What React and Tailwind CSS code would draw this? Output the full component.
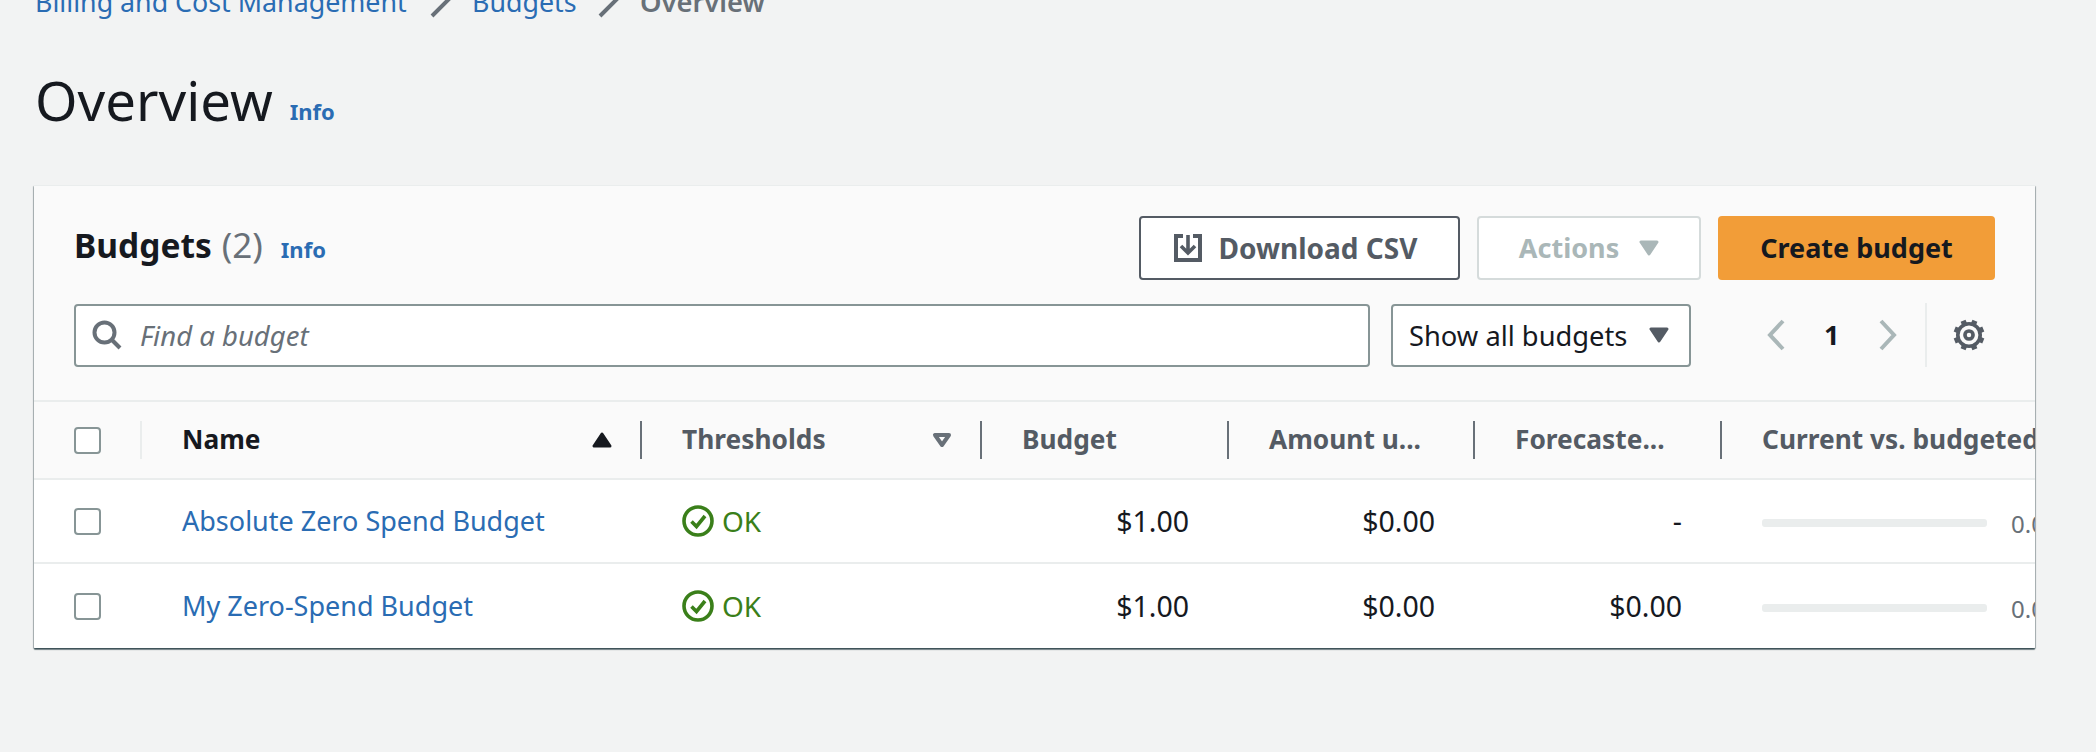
import React from "react";

const Caret = ({ className, hollow }) => (
  <svg viewBox="0 0 20 16" className={className}>
    <path d={hollow ? "M3 3 H17 L10 13 Z" : "M2 2 H18 L10 14 Z"} fill={hollow ? "none" : "currentColor"} stroke="currentColor" strokeWidth={hollow ? 4 : 3} strokeLinejoin="round" />
  </svg>
);
const SortUp = () => (
  <svg viewBox="0 0 20 16" className="w-[20px] h-[16px] text-[#16191f]">
    <path d="M2 14 H18 L10 2 Z" fill="currentColor" stroke="currentColor" strokeWidth="3" strokeLinejoin="round" />
  </svg>
);
const Check = () => (
  <svg viewBox="0 0 32 32" className="w-[32px] h-[32px] text-[#3a7f1a] shrink-0" fill="none" stroke="currentColor">
    <circle cx="16" cy="16" r="14" strokeWidth="3.6" />
    <path d="M9.5 16.5 L14.5 21.5 L23 11" strokeWidth="3.6" />
  </svg>
);
const Checkbox = () => <div className="w-[27px] h-[27px] rounded-[4px] border-2 border-[#879596] bg-white" />;
const Crumb = () => (
  <svg viewBox="0 0 20 30" className="w-[20px] h-[30px] text-[#687078] overflow-visible shrink-0" fill="none" stroke="currentColor" strokeWidth="4">
    <path d="M2 -3 L18 13 L2 29" />
  </svg>
);
const Gear = () => (
  <svg viewBox="1 1 30 30" className="w-[32px] h-[32px] text-[#545b64]" fill="none" stroke="currentColor">
    <circle cx="16" cy="16" r="10.5" strokeWidth="3.4" />
    <circle cx="16" cy="16" r="3.8" strokeWidth="3.4" />
    {[0, 45, 90, 135, 180, 225, 270, 315].map((a) => (
      <path key={a} d="M16 1.5 V5" strokeWidth="5" transform={`rotate(${a + 22.5} 16 16)`} />
    ))}
  </svg>
);

const HeadCell = ({ children, divider = true, dark, icon }) => (
  <div className="relative flex items-center h-full pl-[40px] pr-[30px]">
    <span className={`font-bold whitespace-nowrap text-[26.3px] ${dark ? "text-[#16191f]" : "text-[#545b64]"}`}>{children}</span>
    {icon && <span className="ml-auto flex">{icon}</span>}
    {divider && <span className="absolute right-0 top-[19px] h-[38px] w-[2px] bg-[#687078]" />}
  </div>
);

const Bar = () => (
  <div className="flex items-center pl-[40px] whitespace-nowrap">
    <div className="w-[225px] h-[8px] rounded-[3px] bg-[#eaeded] shrink-0 mt-[4px]" />
    <span className="ml-[24px] text-[#687078] text-[24px] mt-[6px]">0.00%</span>
  </div>
);

const Row = ({ name, forecast, last }) => (
  <div className={`grid grid-cols-[108px_500px_340px_247px_246px_247px_1fr] h-[84px] items-center bg-white text-[27px] ${last ? "" : "border-b-2 border-[#eaeded]"}`}>
    <div className="pl-[40px] flex"><Checkbox /></div>
    <div className="pl-[40px] text-[#2a6cb3] whitespace-nowrap mt-[1px]">{name}</div>
    <div className="pl-[40px] flex items-center gap-[8px] text-[#3a7f1a] text-[28px]"><Check />OK</div>
    <div className="pr-[40px] text-right text-[#16191f] text-[28.5px]">$1.00</div>
    <div className="pr-[40px] text-right text-[#16191f] text-[28.5px]">$0.00</div>
    <div className="pr-[40px] text-right text-[#16191f] text-[28.5px]">{forecast}</div>
    <Bar />
  </div>
);

export default function App() {
  return (
    <div className="h-[752px] overflow-hidden bg-[#f2f3f3] text-[27px] text-[#16191f]" style={{ fontFamily: '"Noto Sans", sans-serif' }}>
      <div className="flex items-center h-[30px] -mt-[13px] pl-[35px] text-[26.8px] leading-none text-[#2a6cb3]">
        <span className="w-[395px] whitespace-nowrap">Billing and Cost Management</span>
        <Crumb />
        <span className="ml-[22px] w-[126px]">Budgets</span>
        <Crumb />
        <span className="ml-[22px] font-semibold text-[#687078] text-[27.3px]">Overview</span>
      </div>
      <div className="flex items-baseline pl-[35px] mt-[51px] h-[64px]">
        <h1 className="text-[54.5px] leading-[64px] text-[#16191f]">Overview</h1>
        <span className="relative -top-[1px] ml-[17px] text-[22px] font-bold text-[#2a6cb3]">Info</span>
      </div>
      <section className="ml-[34px] w-[2001px] mt-[53px] overflow-hidden rounded-[1px] bg-white border-t border-[#eaeded] shadow-[0_2px_1px_0_rgba(0,28,36,0.5),1px_1px_1px_0_rgba(0,28,36,0.3),-1px_1px_1px_0_rgba(0,28,36,0.3)]">
        <div className="bg-[#fafafa] px-[40px] pt-[30px] h-[216px] border-b-2 border-[#eaeded]">
          <div className="flex items-center h-[64px]">
            <div className="flex items-baseline -mt-[5px]">
              <h2 className="font-bold text-[33.5px]">Budgets</h2>
              <span className="ml-[10px] text-[35px] text-[#687078]">(2)</span>
              <span className="ml-[18px] text-[22px] font-bold text-[#2a6cb3]">Info</span>
            </div>
            <button className="ml-auto w-[321px] h-[64px] flex items-center justify-center gap-[17px] bg-white border-2 border-[#545b64] rounded-[4px] pr-[8px] font-bold text-[28px] text-[#545b64]">
              <svg viewBox="0 0 28 28" className="w-[28px] h-[28px]" fill="none" stroke="currentColor" strokeWidth="4">
                <path d="M9 2 H2 V26 H26 V2 H19" />
                <path d="M14 1 V17 M7 12 L14 19 L21 12" strokeWidth="3.6" />
              </svg>
              Download CSV
            </button>
            <button className="ml-[17px] w-[224px] h-[64px] flex items-center justify-center gap-[20px] bg-white border-2 border-[#d5dbdb] rounded-[4px] font-bold text-[27px] text-[#aab7b8]">
              Actions
              <Caret className="w-[20px] h-[16px]" />
            </button>
            <button className="ml-[17px] w-[277px] h-[64px] bg-[#f29d38] rounded-[4px] font-bold text-[27px] text-[#16191f]">Create budget</button>
          </div>
          <div className="flex items-center mt-[23px] h-[64px]">
            <div className="w-[1296px] h-[63px] flex items-center bg-white border-2 border-[#879596] rounded-[4px] pl-[16px]">
              <svg viewBox="0 0 30 30" className="w-[30px] h-[30px] text-[#687078]" fill="none" stroke="currentColor" strokeWidth="4">
                <circle cx="12.5" cy="12.5" r="10" />
                <path d="M20 20 L28 28" />
              </svg>
              <span className="ml-[18px] mt-[2px] italic text-[27.5px] text-[#687078]">Find a budget</span>
            </div>
            <div className="ml-[21px] w-[300px] h-[63px] flex items-center bg-white border-2 border-[#879596] rounded-[4px] pl-[16px] pr-[20px]">
              <span className="mt-[2px] whitespace-nowrap text-[27.3px]">Show all budgets</span>
              <Caret className="ml-auto w-[20px] h-[16px] text-[#545b64]" />
            </div>
            <div className="ml-[75px] flex items-center">
              <svg viewBox="0 0 20 32" className="w-[20px] h-[32px] text-[#aab7b8]" fill="none" stroke="currentColor" strokeWidth="4"><path d="M17 2 L4 16 L17 30" /></svg>
              <span className="ml-[38px] w-[20px] font-bold">1</span>
              <svg viewBox="0 0 20 32" className="ml-[34px] w-[20px] h-[32px] text-[#aab7b8]" fill="none" stroke="currentColor" strokeWidth="4"><path d="M3 2 L16 16 L3 30" /></svg>
            </div>
            <div className="ml-[27px] w-[2px] h-[64px] bg-[#eaeded]" />
            <div className="ml-[26px] flex"><Gear /></div>
          </div>
        </div>
        <div className="grid grid-cols-[108px_500px_340px_247px_246px_247px_1fr] h-[78px] bg-[#fafafa] border-b-2 border-[#eaeded] items-center">
          <div className="relative h-full flex items-center pl-[40px]">
            <Checkbox />
            <span className="absolute right-0 top-[19px] h-[38px] w-[2px] bg-[#eaeded]" />
          </div>
          <HeadCell dark icon={<SortUp />}>Name</HeadCell>
          <HeadCell icon={<Caret hollow className="w-[20px] h-[16px] text-[#687078]" />}>Thresholds</HeadCell>
          <HeadCell>Budget</HeadCell>
          <HeadCell>Amount u...</HeadCell>
          <HeadCell>Forecaste...</HeadCell>
          <HeadCell divider={false}>Current vs. budgeted</HeadCell>
        </div>
        <Row name="Absolute Zero Spend Budget" forecast="-" />
        <Row name="My Zero-Spend Budget" forecast="$0.00" last />
      </section>
    </div>
  );
}
